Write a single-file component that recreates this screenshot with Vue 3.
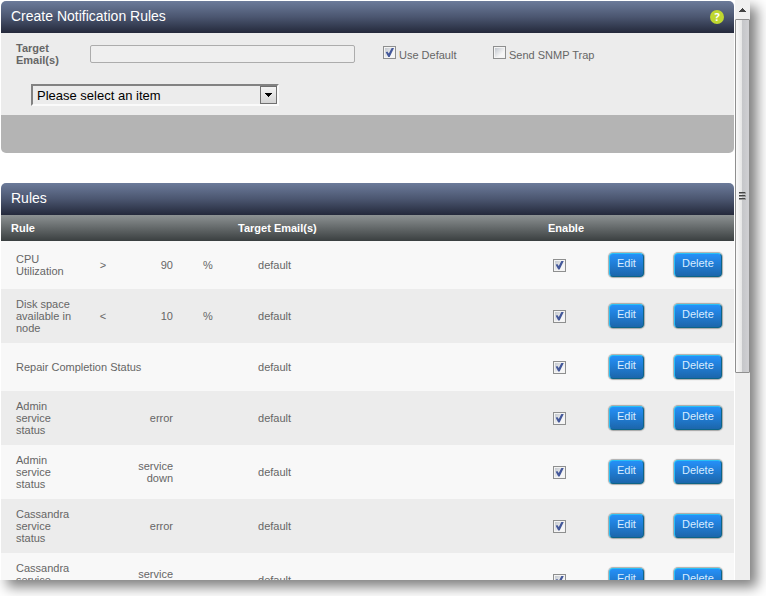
<script setup>
import { ref } from 'vue'

const useDefault = ref(true)
const sendTrap = ref(false)
const email = ref('')
const item = ref('')

const rules = ref([
  { name: 'CPU Utilization', op: '>', value: '90', unit: '%', email: 'default', enabled: true },
  { name: 'Disk space available in node', op: '<', value: '10', unit: '%', email: 'default', enabled: true },
  { name: 'Repair Completion Status', wide: true, email: 'default', enabled: true },
  { name: 'Admin service status', value: 'error', email: 'default', enabled: true },
  { name: 'Admin service status', value: 'service down', email: 'default', enabled: true },
  { name: 'Cassandra service status', value: 'error', email: 'default', enabled: true },
  { name: 'Cassandra service status', value: 'service down', email: 'default', enabled: true },
])
</script>

<template>
  <div class="page">
    <div class="window">
      <main class="content">
        <section class="panel create">
          <header class="title">
            <h2>Create Notification Rules</h2>
            <button type="button" class="help" aria-label="Help">?</button>
          </header>
          <form class="form" @submit.prevent>
            <div class="fields">
              <label class="email-label" for="email">Target Email(s)</label>
              <input id="email" v-model="email" class="email" type="text" :disabled="useDefault" />
              <label class="option default-option">
                <input v-model="useDefault" class="check" type="checkbox" />
                <span>Use Default</span>
              </label>
              <label class="option">
                <input v-model="sendTrap" class="check" type="checkbox" />
                <span>Send SNMP Trap</span>
              </label>
            </div>
            <div class="picker">
              <select v-model="item" aria-label="Rule item">
                <option value="">Please select an item</option>
                <option>CPU Utilization</option>
                <option>Repair Completion Status</option>
              </select>
              <span class="arrow">
                <svg width="8" height="4" viewBox="0 0 8 4" shape-rendering="crispEdges"><path d="M0 0h7v1H0zM1 1h5v1H1zM2 2h3v1H2zM3 3h1v1H3z" /></svg>
              </span>
            </div>
          </form>
          <footer class="actions"></footer>
        </section>

        <section class="panel">
          <header class="title"><h2>Rules</h2></header>
          <table>
            <colgroup>
              <col class="c-name" /><col class="c-op" /><col class="c-value" /><col class="c-unit" />
              <col /><col class="c-enable" /><col class="c-edit" /><col class="c-delete" />
            </colgroup>
            <thead>
              <tr>
                <th colspan="4" class="first">Rule</th>
                <th>Target Email(s)</th>
                <th colspan="3">Enable</th>
              </tr>
            </thead>
            <tbody>
              <tr v-for="(rule, i) in rules" :key="i">
                <td class="name" :colspan="rule.wide ? 4 : 1">{{ rule.name }}</td>
                <template v-if="!rule.wide">
                  <td class="op">{{ rule.op }}</td>
                  <td class="value">{{ rule.value }}</td>
                  <td class="unit">{{ rule.unit }}</td>
                </template>
                <td class="target">{{ rule.email }}</td>
                <td class="enable"><input v-model="rule.enabled" class="check" type="checkbox" :aria-label="'Enable ' + rule.name" /></td>
                <td><button type="button" class="btn">Edit</button></td>
                <td><button type="button" class="btn">Delete</button></td>
              </tr>
            </tbody>
          </table>
        </section>
      </main>

      <div class="scrollbar" aria-hidden="true">
        <div class="up">
          <svg width="7" height="4" viewBox="0 0 7 4" shape-rendering="crispEdges"><path fill="#444" d="M3 0h1v1H3zM2 1h3v1H2zM1 2h5v1H1zM0 3h7v1H0z" /></svg>
        </div>
        <div class="thumb">
          <svg width="8" height="8" viewBox="0 0 8 8" shape-rendering="crispEdges"><path fill="#444" d="M0 0h6v1H0zM0 3h6v1H0zM0 6h6v1H0z" /><path fill="#999" d="M0 1h7v1H0zM0 4h7v1H0zM0 7h7v1H0zM6 0h1v1H6zM6 3h1v1H6zM6 6h1v1H6z" /></svg>
        </div>
      </div>
    </div>
  </div>
</template>

<style>
body {
  margin: 0;
  background: #fff;
}
</style>

<style scoped>
.page {
  box-sizing: border-box;
  height: 100vh;
  padding: 0 16px 16px 0;
  overflow: hidden;
  font-family: "Liberation Sans", Arial, sans-serif;
  font-size: 11px;
  line-height: 12px;
  color: #666;
}
.window {
  display: flex;
  height: 100%;
  background: #fff;
  box-shadow: 7px 7px 12px rgba(0, 0, 0, 0.5);
}
.content {
  flex: 1;
  min-width: 0;
  padding: 1px 1px 0;
  overflow: hidden;
}
.panel {
  border-radius: 5px;
  overflow: hidden;
}
.create {
  margin-bottom: 30px;
}
.title {
  display: flex;
  align-items: center;
  justify-content: space-between;
  height: 32px;
  padding: 0 10px;
  background: linear-gradient(#6c7b9a, #4b5670 50%, #24293b);
}
h2 {
  margin: 0;
  padding-bottom: 2px;
  font-size: 14px;
  line-height: 16px;
  font-weight: normal;
  color: #fff;
}
.help {
  width: 14px;
  height: 14px;
  padding: 0;
  border: 0;
  border-radius: 50%;
  background: #bfd730;
  color: #fff;
  font: bold 11px/14px "Open Sans", sans-serif;
  text-align: center;
}
.form {
  padding: 9px 15px;
  background: #ececec;
}
.fields {
  display: flex;
  align-items: center;
}
.email-label {
  width: 50px;
  margin-right: 24px;
  font-weight: bold;
}
.email {
  box-sizing: border-box;
  width: 265px;
  height: 18px;
  margin-right: 28px;
  padding: 0 4px;
  border: 1px solid #acacac;
  border-radius: 2px;
  background: #efefef;
  font: inherit;
}
.option {
  display: flex;
  gap: 3px;
  padding-bottom: 1px;
}
.option span {
  padding-top: 3px;
}
.default-option {
  width: 110px;
}
.check {
  appearance: none;
  display: block;
  box-sizing: border-box;
  flex: none;
  width: 13px;
  height: 13px;
  margin: 0;
  padding: 1px;
  border: 1px solid #8e8f8f;
  background: linear-gradient(135deg, #c2c7ce, #f6f6f6 70%) content-box, #f4f4f4;
}
.check:checked::after {
  content: "";
  display: block;
  width: 9px;
  height: 9px;
  background: #44589a;
  clip-path: polygon(8% 48%, 26% 40%, 42% 62%, 74% 0, 100% 0, 52% 100%, 36% 100%);
}
.picker {
  display: grid;
  width: 248px;
  margin: 18px 0 0 15px;
}
.picker select {
  appearance: none;
  grid-area: 1 / 1;
  height: 22px;
  padding: 0 20px 0 4px;
  border: 2px solid;
  border-color: #828282 #fafafa #fafafa #828282;
  border-radius: 0;
  background: #ececec;
  font-family: inherit;
  font-size: 13px;
  color: #000;
}
.arrow {
  grid-area: 1 / 1;
  place-self: center end;
  display: flex;
  align-items: center;
  justify-content: center;
  box-sizing: border-box;
  width: 17px;
  height: 18px;
  margin-right: 2px;
  border: 1px solid #707070;
  background: linear-gradient(#f4f4f4, #d4d4d4);
  pointer-events: none;
}
.actions {
  height: 38px;
  background: #b4b4b4;
}
table {
  width: 100%;
  table-layout: fixed;
  border-collapse: collapse;
}
.c-name { width: 76px; }
.c-op { width: 52px; }
.c-value { width: 44px; }
.c-unit { width: 65px; }
.c-enable { width: 60px; }
.c-edit { width: 65px; }
.c-delete { width: 61px; }
thead tr {
  background: linear-gradient(#8d9293, #3a3f40);
}
th {
  height: 26px;
  padding: 0;
  text-align: left;
  color: #fff;
}
.first {
  padding-left: 10px;
}
td {
  box-sizing: border-box;
  height: 48px;
  padding: 9px 0;
}
tbody tr {
  background: #f8f8f8;
}
tbody tr:nth-child(even) {
  background: #ececec;
}
.name { padding-left: 15px; }
.op { text-align: center; }
.value { text-align: right; }
.unit { padding-left: 30px; }
.target { padding-left: 20px; }
.enable { padding-left: 5px; }
.btn {
  display: block;
  height: 24px;
  margin-left: 1px;
  padding: 0 7px 4px;
  border: 1px solid;
  border-color: #2ac0f5 #0d6487 #0d6487 #2ac0f5;
  border-radius: 4px;
  background: linear-gradient(#2590f8, #1c66ab);
  box-shadow: 0 0 1px 1px rgba(80, 80, 80, 0.45);
  color: #d8ecff;
  font: inherit;
}
.scrollbar {
  display: flex;
  flex-direction: column;
  width: 15px;
  background: #eee;
}
.up {
  display: flex;
  align-items: center;
  justify-content: center;
  height: 19px;
  background: #f0f0f0;
}
.thumb {
  display: flex;
  align-items: center;
  justify-content: center;
  box-sizing: border-box;
  height: 61%;
  border: 1px solid #8f8f8f;
  border-radius: 1px;
  background: linear-gradient(90deg, #fafafa, #e6e6e6 45%, #c6c7ca 50%, #d0d0d3);
}
</style>
